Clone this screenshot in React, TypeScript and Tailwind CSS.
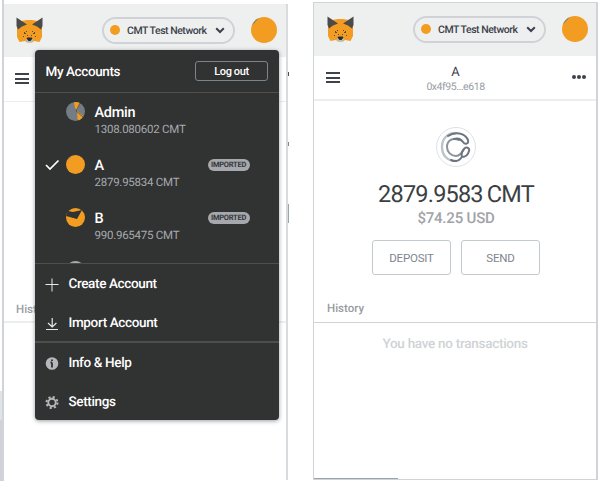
import type { ReactNode } from "react";

function Fox() {
  return (
    <svg className="h-[26px] w-[27px] shrink-0" viewBox="0 0 27 26">
      <path d="M5 4l6-1h5l6 1 4 7v9l-2.500 5-5.500-1-2 1.500h-5L9 24l-5.500 1L1 20v-9z" fill="#f29d22" />
      <path d="M.5.5l10.500 7-5 2L2 12.500 .5 9zM26.500.500l-10.500 7 5 2 4 3 1.500-3.500z" fill="#4d4b49" />
      <path d="M8 15h1v1h1v1H8zM10 14h1v1h-1zM19 15h-1v1h-1v1h2zM16 14h1v1h-1zM11 18h1v1h-1zM15 18h1v1h-1zM7 19h1v1H7zM19 19h1v1h-1z" fill="#5b4a35" />
      <path d="M9.500 23l2-2h4l2 2-2 2.500h-4z" fill="#b7bcc1" />
      <path d="M11.500 20.500h4l1 1-2 2.500h-2l-2-2.500z" fill="#292c2e" />
    </svg>
  );
}

function Bars({ className }: { className: string }) {
  return (
    <div className={`flex w-[14px] flex-col gap-[2.5px] ${className}`}>
      <i className="h-[2px] bg-[#3d424b]" />
      <i className="h-[2px] bg-[#3d424b]" />
      <i className="h-[2px] bg-[#3d424b]" />
    </div>
  );
}

function Header({ className }: { className: string }) {
  return (
    <header className={`flex h-[53px] shrink-0 items-center bg-[#eef0f0] ${className}`}>
      <Fox />
      <div className="ml-[59px] flex h-[27px] w-[133px] shrink-0 items-center rounded-full border-2 border-[#d0d2d8] pl-[6px]">
        <span className="size-[10px] shrink-0 rounded-full bg-[#f29d22]" />
        <span className="ml-[7px] w-[79px] shrink-0 pt-[2px] text-[10.5px] font-medium tracking-[-0.47px] text-[#3d424b] whitespace-nowrap">CMT Test Network</span>
        <svg className="ml-[9px] h-[7px] w-[10px] shrink-0" viewBox="0 0 10 7" fill="none">
          <path d="M1.2 1.2 5 5l3.8-3.8" stroke="#3d424b" strokeWidth="2" />
        </svg>
      </div>
      <svg className="ml-[16px] size-[26px] shrink-0" viewBox="0 0 26 26">
        <circle cx="13" cy="13" r="13" fill="#f29d22" />
        <path d="M1 8.500Q3 3 8 1z" fill="#747f88" />
      </svg>
    </header>
  );
}

function Avatar({ kind }: { kind: string }) {
  return (
    <svg className="size-[19px] shrink-0" viewBox="0 0 19 19">
      <circle cx="9.5" cy="9.5" r="9.5" fill={kind === "admin" ? "#747d85" : kind === "next" ? "#a5a8ad" : "#f29d22"} />
      {kind === "admin" && (
        <>
          <path d="M8 .2A9.5 9.5 0 0 1 14 1l-3 7-2-2z" fill="#f29d22" />
          <path d="M11 9l6.5 5-4 4.3-2-1z" fill="#f29d22" />
          <path d="M10 9l4-8M10 9l7 6" stroke="#3e4347" strokeWidth=".7" />
        </>
      )}
      {kind === "a" && <path d="M1 5 5 1l-.7 2z" fill="#747d85" />}
      {kind === "b" && <path d="M0 8 2 3l5 1 9-2-5 9z" fill="#313232" />}
    </svg>
  );
}

function Account({ kind, name, amount, imported, checked }: { kind: string; name: string; amount: string; imported?: boolean; checked?: boolean }) {
  return (
    <div className="flex h-[53px] shrink-0 items-start pt-[9px] pl-[10px]">
      <svg className="mt-[4px] h-[12px] w-[15px] shrink-0" viewBox="0 0 15 12" fill="none">
        {checked && <path d="M1 6 5 10l8.500-8.500" stroke="white" strokeWidth="1.7" />}
      </svg>
      <div className="ml-[6px]"><Avatar kind={kind} /></div>
      <div className="ml-[10px] w-[113px] whitespace-nowrap">
        <div className="h-[20px] text-[14.5px] leading-[21px] font-medium tracking-[-0.3px] text-white">{name}</div>
        <div className="h-[14px] text-[11.5px] leading-[14px] tracking-[-0.25px] text-[#a7aaae]">{amount}</div>
      </div>
      {imported && (
        <div className="mt-[4px] flex h-[12px] w-[42px] items-center justify-center rounded-full bg-[#a5a8ad] text-[7.5px] font-bold tracking-[-0.25px] text-[#37393b]">
          IMPORTED
        </div>
      )}
    </div>
  );
}

function MenuItem({ icon, label }: { icon: ReactNode; label: string }) {
  return (
    <div className="flex h-[39px] shrink-0 items-center pt-[2px] pl-[10px]">
      <svg className="size-[14px] shrink-0" viewBox="0 0 14 14" fill="none">{icon}</svg>
      <span className="ml-[10px] text-[13.5px] font-medium tracking-[-0.36px] whitespace-nowrap text-white">{label}</span>
    </div>
  );
}

function AccountMenu() {
  return (
    <div className="absolute top-[46px] left-[30.5px] flex h-[370px] w-[244.5px] flex-col overflow-hidden rounded-[4px] bg-[#313232] shadow-[0_1px_4px_rgba(70,75,85,0.55)]">
      <div className="flex h-[43px] shrink-0 items-center justify-between border-b border-[#514d4a] pr-[11px] pl-[11px]">
        <span className="mt-[2px] text-[13.5px] font-medium tracking-[-0.4px] text-white">My Accounts</span>
        <button className="h-[20px] w-[73px] rounded-[3px] border border-[#7c858d] text-[11px] leading-[19px] font-medium tracking-[-0.4px] text-white">Log out</button>
      </div>
      <div className="flex h-[171px] shrink-0 flex-col overflow-hidden border-b border-[#514d4a]">
        <Account kind="admin" name="Admin" amount="1308.080602 CMT" />
        <Account kind="a" name="A" amount="2879.95834 CMT" imported checked />
        <Account kind="b" name="B" amount="990.965475 CMT" imported />
        <Account kind="next" name="" amount="" />
      </div>
      <div className="h-[79px] shrink-0 border-b-2 border-[#514d4a]">
        <MenuItem label="Create Account" icon={<path d="M7 .5v13M.5 6.5h13" stroke="#e7e8e9" />} />
        <MenuItem label="Import Account" icon={<path d="M7.2 1v9M3 6l4.2 4 4.2-4M1 12.500h12" stroke="#e7e8e9" strokeWidth="1.2" />} />
      </div>
      <MenuItem label="Info & Help" icon={<><circle cx="7" cy="6.500" r="6.3" fill="#b5b7ba" /><path d="M7 2.500v1.5M7 5.500v5M5.5 5.500H7" stroke="#313232" strokeWidth="1.8" /></>} />
      <MenuItem label="Settings" icon={<><circle cx="7" cy="6.500" r="3.700" stroke="#b5b7ba" strokeWidth="1.9" /><circle cx="7" cy="6.500" r="5.5" stroke="#b5b7ba" strokeWidth="2" strokeDasharray="2.16 2.16" /></>} />
    </div>
  );
}

function Coin() {
  return (
    <div className="flex size-[40px] items-center justify-center rounded-full border border-[#dfe2e4]">
      <svg className="size-[32px]" viewBox="0 0 32 32" fill="none" strokeLinecap="round" strokeLinejoin="round">
        <path d="M16 2C7 2 2 8 2 16s5 14 14 14" stroke="#bcc3c9" strokeWidth="2.4" />
        <path d="M19 9c-7-3-12 1-12 7 0 5 4 9 9 9 4 0 6-3 8-7" stroke="#8a939b" strokeWidth="2" />
        <path d="M8 5c7-5 17-3 20 4 1 4-3 5-5 2-2-3-5-4-9-3M24 18c2-3 6-1 5 2-1 4-4 6-7 6-3 4-7 5-11 3M22 26c-1-3 0-6 2-8" stroke="#6d7680" strokeWidth="2" />
      </svg>
    </div>
  );
}

export default function App() {
  return (
    <main className="flex h-[481px] w-[600px] overflow-hidden bg-white font-['Roboto',sans-serif] [text-rendering:geometricPrecision]">
      <div className="flex w-[4px] shrink-0 flex-col border-r-2 border-[#d0d4d8] pt-[4px]">
        <div className="mt-[387px] h-[29px] bg-[#e0e3e5]" />
        <div className="h-[61px] bg-[#d0d2d8]" />
      </div>
      <section className="relative mt-[4px] flex h-[476px] w-[284px] shrink-0 flex-col border-r-2 border-[#d8dcdf]">
        <Header className="pl-[12px] pb-px" />
        <div className="h-[45px] shrink-0 border-b border-[#eceeee] pt-[16px] pl-[11px]"><Bars className="" /></div>
        <div className="flex h-[221px] shrink-0 items-end border-b-2 border-[#eceeee] pb-[3px] pl-[12px] text-[11.5px] font-medium text-[#9a9da3]">History</div>
        <AccountMenu />
      </section>
      <div className="flex w-[25px] shrink-0 flex-col">
        <div className="mt-[72px] h-[4px] w-[1px] bg-[#4b5055]" />
        <div className="mt-[66px] h-[4px] w-[1px] bg-[#7c8890]" />
        <div className="mt-[58px] h-[19px] w-[1px] bg-[#9ca4ab]" />
      </div>
      <section className="mt-[2px] flex h-[478px] w-[285px] shrink-0 flex-col border border-r-2 border-[#d0d4d8]">
        <Header className="pl-[13px] pb-px" />
        <div className="flex h-[45px] shrink-0 items-start border-b-2 border-[#eceeee] pl-[12px]">
          <Bars className="mt-[16px]" />
          <div className="ml-[78px] w-[75px] text-center">
            <div className="mt-[9px] h-[15px] text-[13px] leading-[15px] text-[#3d424b]">A</div>
            <div className="h-[13px] text-[10.5px] leading-[13px] tracking-[-0.45px] text-[#989da3]">0x4f95...e618</div>
          </div>
          <div className="mt-[19px] ml-[79px] flex gap-[1px]"><i className="size-[4px] rounded-full bg-[#3d424b]" /><i className="size-[4px] rounded-full bg-[#3d424b]" /><i className="size-[4px] rounded-full bg-[#3d424b]" /></div>
        </div>
        <div className="flex h-[222px] shrink-0 flex-col items-center border-b border-[#d0d4d8] pt-[26px] pl-[2px]">
          <Coin />
          <div className="mt-[13px] flex h-[28px] items-center gap-[4px] text-[23.5px] leading-[28px] tracking-[-0.8px] whitespace-nowrap text-[#3b3f43]"><span>2879.9583</span><span>CMT</span></div>
          <div className="h-[21px] text-[15px] leading-[21px] font-medium tracking-[-0.2px] text-[#a0a3a7]">$74.25 USD</div>
          <div className="mt-[11px] flex gap-[10px] text-[11.5px] tracking-[-0.2px] text-[#80868e]">
            <button className="h-[35px] w-[79px] rounded-[3px] border border-[#c3cace] pt-[2px]">DEPOSIT</button>
            <button className="h-[35px] w-[79px] rounded-[3px] border border-[#c3cace] pt-[2px]">SEND</button>
          </div>
          <div className="mt-[25px] w-full pl-[11px] text-[11.5px] leading-[16px] font-medium text-[#989ca1]">History</div>
        </div>
        <div className="pt-[11px] text-center text-[13.5px] leading-[20px] font-medium tracking-[-0.28px] text-[#d0d3d5]">You have no transactions</div>
        <div className="mt-auto h-[1px] w-[84px] bg-[#9ca4ab]" />
      </section>
    </main>
  );
}
